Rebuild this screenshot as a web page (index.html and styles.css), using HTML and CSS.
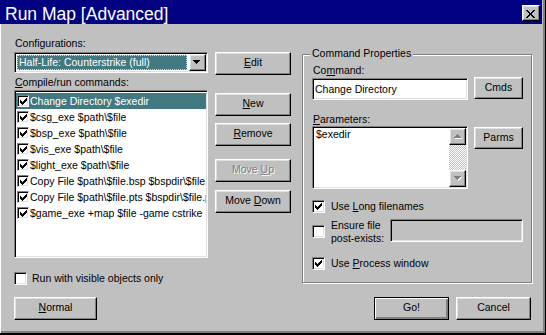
FILE: index.html
```
<!DOCTYPE html>
<html>
<head>
<meta charset="utf-8">
<title>Run Map [Advanced]</title>
<link rel="stylesheet" href="styles.css">
</head>
<body>
<div class="window">
  <div class="titlebar">
    <span class="title">Run Map [Advanced]</span>
    <span class="close-btn"><svg width="9" height="8" viewBox="0 0 9 8"><path d="M0 0h2v1h-2zM7 0h2v1h-2zM1 1h2v1h-2zM6 1h2v1h-2zM2 2h2v1h-2zM5 2h2v1h-2zM3 3h3v2h-3zM2 5h2v1h-2zM5 5h2v1h-2zM1 6h2v1h-2zM6 6h2v1h-2zM0 7h2v1h-2zM7 7h2v1h-2z" fill="#000"/></svg></span>
  </div>
  <div class="client">
    <div class="main">
      <div class="left">
        <div class="label label-config">Configurations:</div>
        <div class="combo field">
          <div class="combo-value">Half-Life: Counterstrike (full)</div>
          <div class="combo-drop raised"><svg width="7" height="4" viewBox="0 0 7 4"><path d="M0 0h7v1h-1v1h-1v1h-1v1h-1v-1h-1v-1h-1v-1h-1z" fill="#000"/></svg></div>
        </div>
        <div class="label label-list"><u>C</u>ompile/run commands:</div>
        <div class="listbox field">
          <div class="list-row selected"><span class="check-box small"><svg width="7" height="7" viewBox="0 0 7 7"><path d="M6 0h1v1h-1zM5 1h2v1h-2zM0 2h1v1h-1zM4 2h3v1h-3zM0 3h2v1h-2zM3 3h3v1h-3zM0 4h5v1h-5zM1 5h3v1h-3zM2 6h1v1h-1z" fill="#000"/></svg></span><span class="row-text">Change Directory $exedir</span></div>
          <div class="list-row"><span class="check-box small"><svg width="7" height="7" viewBox="0 0 7 7"><path d="M6 0h1v1h-1zM5 1h2v1h-2zM0 2h1v1h-1zM4 2h3v1h-3zM0 3h2v1h-2zM3 3h3v1h-3zM0 4h5v1h-5zM1 5h3v1h-3zM2 6h1v1h-1z" fill="#000"/></svg></span><span class="row-text">$csg_exe $path\$file</span></div>
          <div class="list-row"><span class="check-box small"><svg width="7" height="7" viewBox="0 0 7 7"><path d="M6 0h1v1h-1zM5 1h2v1h-2zM0 2h1v1h-1zM4 2h3v1h-3zM0 3h2v1h-2zM3 3h3v1h-3zM0 4h5v1h-5zM1 5h3v1h-3zM2 6h1v1h-1z" fill="#000"/></svg></span><span class="row-text">$bsp_exe $path\$file</span></div>
          <div class="list-row"><span class="check-box small"><svg width="7" height="7" viewBox="0 0 7 7"><path d="M6 0h1v1h-1zM5 1h2v1h-2zM0 2h1v1h-1zM4 2h3v1h-3zM0 3h2v1h-2zM3 3h3v1h-3zM0 4h5v1h-5zM1 5h3v1h-3zM2 6h1v1h-1z" fill="#000"/></svg></span><span class="row-text">$vis_exe $path\$file</span></div>
          <div class="list-row"><span class="check-box small"><svg width="7" height="7" viewBox="0 0 7 7"><path d="M6 0h1v1h-1zM5 1h2v1h-2zM0 2h1v1h-1zM4 2h3v1h-3zM0 3h2v1h-2zM3 3h3v1h-3zM0 4h5v1h-5zM1 5h3v1h-3zM2 6h1v1h-1z" fill="#000"/></svg></span><span class="row-text">$light_exe $path\$file</span></div>
          <div class="list-row"><span class="check-box small"><svg width="7" height="7" viewBox="0 0 7 7"><path d="M6 0h1v1h-1zM5 1h2v1h-2zM0 2h1v1h-1zM4 2h3v1h-3zM0 3h2v1h-2zM3 3h3v1h-3zM0 4h5v1h-5zM1 5h3v1h-3zM2 6h1v1h-1z" fill="#000"/></svg></span><span class="row-text">Copy File $path\$file.bsp $bspdir\$file.bsp</span></div>
          <div class="list-row"><span class="check-box small"><svg width="7" height="7" viewBox="0 0 7 7"><path d="M6 0h1v1h-1zM5 1h2v1h-2zM0 2h1v1h-1zM4 2h3v1h-3zM0 3h2v1h-2zM3 3h3v1h-3zM0 4h5v1h-5zM1 5h3v1h-3zM2 6h1v1h-1z" fill="#000"/></svg></span><span class="row-text">Copy File $path\$file.pts $bspdir\$file.pts</span></div>
          <div class="list-row"><span class="check-box small"><svg width="7" height="7" viewBox="0 0 7 7"><path d="M6 0h1v1h-1zM5 1h2v1h-2zM0 2h1v1h-1zM4 2h3v1h-3zM0 3h2v1h-2zM3 3h3v1h-3zM0 4h5v1h-5zM1 5h3v1h-3zM2 6h1v1h-1z" fill="#000"/></svg></span><span class="row-text">$game_exe +map $file -game cstrike -console</span></div>
        </div>
        <div class="check-row check-visible"><span class="check-box"></span><span>Run with visible objects only</span></div>
      </div>
      <div class="mid">
        <div class="btn raised btn-edit"><span><u>E</u>dit</span></div>
        <div class="btn raised btn-new"><span><u>N</u>ew</span></div>
        <div class="btn raised btn-remove"><span><u>R</u>emove</span></div>
        <div class="btn raised btn-up disabled"><span>Move <u>U</u>p</span></div>
        <div class="btn raised btn-down"><span>Move <u>D</u>own</span></div>
      </div>
      <div class="group">
        <span class="legend">Command Properties</span>
        <div class="label">Co<u>m</u>mand:</div>
        <div class="prop-row">
          <div class="edit field">Change Directory</div>
          <div class="btn raised btn-side">Cmds</div>
        </div>
        <div class="label label-params"><u>P</u>arameters:</div>
        <div class="prop-row">
          <div class="textarea field">
            <div class="textarea-text">$exedir</div>
            <div class="scrollbar">
              <div class="scroll-btn raised"><svg width="8" height="5" viewBox="0 0 8 5"><path d="M4 1h1v1h1v1h1v1h1v1h-7v-1h1v-1h1v-1h1z" fill="#fff"/><path d="M3 0h1v1h1v1h1v1h1v1h-7v-1h1v-1h1v-1h1z" fill="#808080"/></svg></div>
              <div class="scroll-track"></div>
              <div class="scroll-btn raised"><svg width="8" height="5" viewBox="0 0 8 5"><path d="M1 1h7v1h-1v1h-1v1h-1v1h-1v-1h-1v-1h-1v-1h-1z" fill="#fff"/><path d="M0 0h7v1h-1v1h-1v1h-1v1h-1v-1h-1v-1h-1v-1h-1z" fill="#808080"/></svg></div>
            </div>
          </div>
          <div class="btn raised btn-side btn-parms">Parms</div>
        </div>
        <div class="check-row check-long"><span class="check-box"><svg width="7" height="7" viewBox="0 0 7 7"><path d="M6 0h1v1h-1zM5 1h2v1h-2zM0 2h1v1h-1zM4 2h3v1h-3zM0 3h2v1h-2zM3 3h3v1h-3zM0 4h5v1h-5zM1 5h3v1h-3zM2 6h1v1h-1z" fill="#000"/></svg></span><span>Use <u>L</u>ong filenames</span></div>
        <div class="ensure-row">
          <span class="check-box"></span>
          <span class="ensure-text">Ensure file<br>post-exists:</span>
          <div class="edit-disabled field"></div>
        </div>
        <div class="check-row check-process"><span class="check-box"><svg width="7" height="7" viewBox="0 0 7 7"><path d="M6 0h1v1h-1zM5 1h2v1h-2zM0 2h1v1h-1zM4 2h3v1h-3zM0 3h2v1h-2zM3 3h3v1h-3zM0 4h5v1h-5zM1 5h3v1h-3zM2 6h1v1h-1z" fill="#000"/></svg></span><span>Use <u>P</u>rocess window</span></div>
      </div>
    </div>
    <div class="bottom">
      <div class="btn raised btn-normal"><span><u>N</u>ormal</span></div>
      <div class="btn btn-go"><span>Go!</span></div>
      <div class="btn raised btn-cancel"><span>Cancel</span></div>
    </div>
  </div>
</div>
</body>
</html>
```
FILE: styles.css
```
body {
  margin: 0;
  background: #c0c0c0;
  font-family: "Liberation Sans", Arial, sans-serif;
  font-size: 10.5px;
  color: #000;
}

svg {
  display: block;
  shape-rendering: crispEdges;
}

u {
  text-decoration: underline;
  text-decoration-thickness: 1px;
  text-underline-offset: 1px;
}

.window {
  box-sizing: border-box;
  width: 546px;
  height: 335px;
  background: #c0c0c0;
  border-right: 1px solid #000;
  border-bottom: 2px solid #000;
  box-shadow: inset -2px -2px 0 #808080;
  display: flex;
  flex-direction: column;
  overflow: hidden;
}

.titlebar {
  height: 24px;
  margin-right: 3px;
  background: #000080;
  display: flex;
  align-items: flex-start;
  justify-content: space-between;
  padding: 0 2px 0 5px;
  flex-shrink: 0;
}

.title {
  color: #fff;
  font-size: 17.5px;
  line-height: 24px;
  padding-top: 2px;
  white-space: nowrap;
}

.close-btn {
  box-sizing: border-box;
  margin-top: 5px;
  width: 18px;
  height: 16px;
  background: #c0c0c0;
  border: 1px solid;
  border-color: #fff #000 #000 #fff;
  box-shadow: inset -1px -1px #808080, inset 1px 1px #dfdfdf;
  display: flex;
  align-items: flex-start;
  justify-content: flex-start;
  padding: 4px 0 0 3px;
}

.raised {
  box-sizing: border-box;
  background: #c0c0c0;
  border: 1px solid;
  border-color: #fff #000 #000 #fff;
  box-shadow: inset -1px -1px #808080, inset 1px 1px #dfdfdf;
}

.field {
  box-sizing: border-box;
  background: #fff;
  border: 1px solid;
  border-color: #808080 #fff #fff #808080;
  box-shadow: inset 1px 1px #000, inset -1px -1px #dfdfdf;
  padding: 1px;
}

.client {
  flex: 1;
  border-left: 1px solid #fff;
  padding: 13px 13px 0 13px;
}

.main {
  display: flex;
  align-items: flex-start;
}

.left {
  width: 194px;
  flex-shrink: 0;
  display: flex;
  flex-direction: column;
}

.label {
  line-height: 13px;
  padding-left: 1px;
  white-space: nowrap;
}

.label-config {
  margin-bottom: 2px;
}

.label-list {
  margin-top: 3px;
  margin-bottom: 1px;
}

.combo {
  width: 194px;
  height: 21px;
  display: flex;
}

.combo-value {
  box-sizing: border-box;
  flex: 1;
  margin: 1px 2px 1px 1px;
  background: #42787f;
  border: 1px dotted #d8d8a8;
  color: #fff;
  padding-left: 1px;
  line-height: 12px;
  white-space: nowrap;
  overflow: hidden;
}

.combo-drop {
  width: 17px;
  height: 17px;
  display: flex;
  align-items: flex-start;
  justify-content: flex-start;
  padding: 5px 0 0 3px;
}

.listbox {
  width: 194px;
  height: 168px;
  padding: 2px 1px 1px 1px;
  overflow: hidden;
}

.list-row {
  height: 16px;
  display: flex;
  align-items: center;
  padding-left: 1px;
  white-space: nowrap;
  line-height: 16px;
  overflow: hidden;
}

.list-row.selected {
  background: #42787f;
  color: #fff;
}

.row-text {
  margin-left: 1px;
}

.check-box {
  box-sizing: border-box;
  width: 13px;
  height: 13px;
  background: #fff;
  border: 1px solid;
  border-color: #808080 #fff #fff #808080;
  box-shadow: inset 1px 1px #000, inset -1px -1px #dfdfdf;
  padding: 2px;
  flex-shrink: 0;
}

.check-box.small {
  width: 12px;
  height: 12px;
  padding: 2px 1px 1px 2px;
}

.check-row {
  display: flex;
  align-items: center;
  line-height: 13px;
  white-space: nowrap;
}

.check-row .check-box {
  margin-right: 6px;
}

.check-visible {
  margin-top: 14px;
}

.check-visible .check-box {
  margin-right: 5px;
}

.mid {
  width: 76px;
  flex-shrink: 0;
  margin-left: 7px;
  margin-top: 15px;
  display: flex;
  flex-direction: column;
}

.btn {
  height: 23px;
  display: flex;
  align-items: center;
  justify-content: center;
  padding-bottom: 2px;
  line-height: 13px;
  white-space: nowrap;
  flex-shrink: 0;
}

.btn-new {
  margin-top: 18px;
}

.btn-remove {
  margin-top: 7px;
}

.btn-up {
  margin-top: 13px;
}

.btn-down {
  margin-top: 8px;
}

.disabled {
  color: #808080;
  text-shadow: 1px 1px 0 #fff;
}

.group {
  position: relative;
  box-sizing: border-box;
  width: 230px;
  height: 229px;
  flex-shrink: 0;
  margin-left: 11px;
  margin-top: 17px;
  border: 1px solid #808080;
  box-shadow: inset 1px 1px #fff, 1px 1px #fff;
  padding: 9px 8px 0 9px;
  display: flex;
  flex-direction: column;
}

.legend {
  position: absolute;
  top: -8px;
  left: 7px;
  padding: 0 2px;
  background: #c0c0c0;
  line-height: 13px;
  white-space: nowrap;
}

.prop-row {
  display: flex;
  align-items: flex-start;
}

.edit {
  width: 156px;
  height: 22px;
  margin-top: 1px;
  display: flex;
  align-items: center;
  padding: 1px 1px 1px 2px;
  line-height: 13px;
  white-space: nowrap;
}

.btn-side {
  width: 49px;
  height: 22px;
  margin-left: auto;
}

.btn-parms {
  margin-top: 1px;
}

.label-params {
  margin-top: 13px;
}

.textarea {
  width: 156px;
  height: 63px;
  display: flex;
}

.textarea-text {
  flex: 1;
  padding-left: 2px;
  line-height: 13px;
}

.scrollbar {
  width: 17px;
  display: flex;
  flex-direction: column;
  background: repeating-conic-gradient(#fff 0% 25%, #c0c0c0 0% 50%) 0 0 / 2px 2px;
}

.scroll-btn {
  width: 17px;
  height: 17px;
  display: flex;
  align-items: flex-start;
  justify-content: flex-start;
  padding: 5px 0 0 4px;
}

.scroll-track {
  flex: 1;
}

.check-long {
  margin-top: 11px;
}

.ensure-row {
  margin-top: 6px;
  display: flex;
  align-items: flex-start;
}

.ensure-row .check-box {
  margin-top: 6px;
  margin-right: 6px;
}

.ensure-text {
  line-height: 13px;
  white-space: nowrap;
}

.edit-disabled {
  width: 133px;
  height: 23px;
  margin-left: auto;
  background: #c0c0c0;
}

.check-process {
  margin-top: 12px;
}

.bottom {
  display: flex;
  margin-top: 12px;
  padding-right: 1px;
}

.btn-normal {
  width: 83px;
}

.btn-go {
  box-sizing: border-box;
  width: 75px;
  margin-left: auto;
  background: #c0c0c0;
  border: 1px solid #000;
  box-shadow: inset 1px 1px #fff, inset -1px -1px #808080, inset -2px -2px #808080;
}

.btn-cancel {
  width: 75px;
  margin-left: 7px;
}
```
